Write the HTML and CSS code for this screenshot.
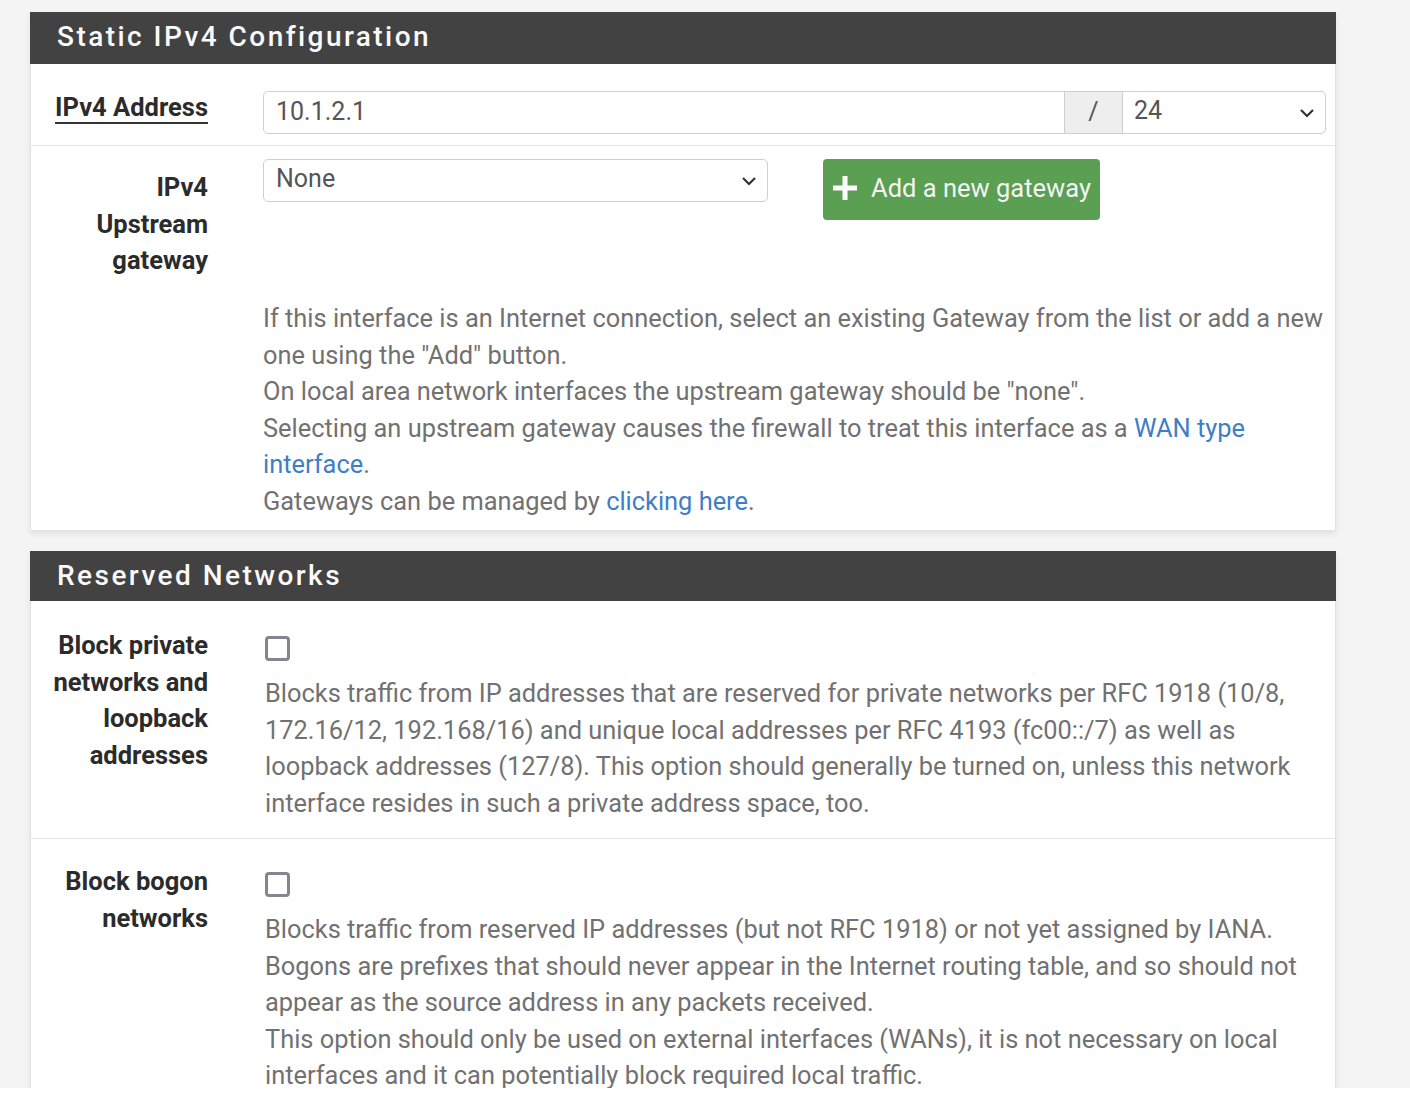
FILE: index.html
```html
<!DOCTYPE html>
<html>
<head>
<meta charset="utf-8">
<link rel="stylesheet" href="styles.css">
</head>
<body>
<div class="page">
  <div class="panel p1">
    <div class="panel-head">Static IPv4 Configuration</div>
    <div class="row r-addr">
      <div class="label"><span class="ul">IPv4 Address</span></div>
      <div class="field">
        <div class="igroup">
          <div class="itext">10.1.2.1</div>
          <div class="addon">/</div>
          <div class="isel"><span>24</span><svg class="chev" width="16" height="10" viewBox="0 0 16 10"><path d="M2 2 L8 8 L14 2" fill="none" stroke="#333" stroke-width="2.2"/></svg></div>
        </div>
      </div>
    </div>
    <div class="row r-gw">
      <div class="label">IPv4<br>Upstream<br>gateway</div>
      <div class="field">
        <div class="gwline">
          <div class="sel"><span>None</span><svg class="chev" width="16" height="10" viewBox="0 0 16 10"><path d="M2 2 L8 8 L14 2" fill="none" stroke="#333" stroke-width="2.2"/></svg></div>
          <div class="btn"><svg width="30" height="30" viewBox="0 0 30 30"><path d="M15 3 V27 M3 15 H27" stroke="#fff" stroke-width="5"/></svg><span>Add a new gateway</span></div>
        </div>
        <div class="help help-gw">If this interface is an Internet connection, select an existing Gateway from the list or add a new one using the "Add" button.<br>On local area network interfaces the upstream gateway should be "none".<br>Selecting an upstream gateway causes the firewall to treat this interface as a <a class="lnk">WAN type interface</a>.<br>Gateways can be managed by <a class="lnk">clicking here</a>.</div>
      </div>
    </div>
  </div>

  <div class="panel p2">
    <div class="panel-head">Reserved Networks</div>
    <div class="row r-cb r-priv">
      <div class="label">Block private networks and loopback addresses</div>
      <div class="field field-cb">
        <div class="cb"></div>
        <div class="help">Blocks traffic from IP addresses that are reserved for private networks per RFC 1918 (10/8, 172.16/12, 192.168/16) and unique local addresses per RFC 4193 (fc00::/7) as well as loopback addresses (127/8). This option should generally be turned on, unless this network interface resides in such a private address space, too.</div>
      </div>
    </div>
    <div class="row r-cb r-bogon">
      <div class="label">Block bogon<br>networks</div>
      <div class="field field-cb">
        <div class="cb"></div>
        <div class="help">Blocks traffic from reserved IP addresses (but not RFC 1918) or not yet assigned by IANA.<br>Bogons are prefixes that should never appear in the Internet routing table, and so should not appear as the source address in any packets received.<br>This option should only be used on external interfaces (WANs), it is not necessary on local interfaces and it can potentially block required local traffic.</div>
      </div>
    </div>
  </div>
</div>
</body>
</html>
```

FILE: styles.css
```css
html, body {
  margin: 0;
  padding: 0;
  background: #ffffff;
}
body {
  font-family: Roboto, "Liberation Sans", sans-serif;
  color: #333;
}
.page {
  height: 1088px;
  overflow: hidden;
  background: #f4f4f4;
  padding: 12px 0 0 30px;
  box-sizing: border-box;
}
.panel {
  width: 1306px;
  background: #fff;
  border: 1px solid #e2e2e2;
  border-top: none;
  box-sizing: border-box;
  box-shadow: 0 3px 6px rgba(0,0,0,0.08);
}
.p2 {
  margin-top: 20px;
}
.panel-head {
  background: #424242;
  color: #fafafa;
  font-size: 28px;
  font-weight: 500;
  letter-spacing: 2.45px;
  height: 52px;
  line-height: 50px;
  padding-left: 27px;
  margin: 0 -1px;
}
.p2 .panel-head {
  height: 50px;
  line-height: 49px;
}
.row {
  display: grid;
  grid-template-columns: 177px 1063px;
  column-gap: 55px;
  border-top: 1px solid #e4e4e4;
}
.panel-head + .row {
  border-top: none;
}
.label {
  text-align: right;
  font-size: 25.5px;
  font-weight: 700;
  line-height: 36.5px;
  color: #2b2b2b;
}
.ul {
  border-bottom: 2px solid #333;
}
.r-addr {
  height: 81px;
  padding-top: 27px;
  box-sizing: border-box;
}
.r-addr .label {
  margin-top: -2px;
}
.igroup {
  display: flex;
  height: 43px;
  border: 1px solid #cfcfcf;
  border-radius: 5px;
  box-sizing: border-box;
  font-size: 25px;
  color: #555;
}
.itext {
  width: 788px;
  padding-left: 12px;
  line-height: 40px;
}
.addon {
  width: 57px;
  background: #eeeeee;
  border-left: 1px solid #cfcfcf;
  border-right: 1px solid #cfcfcf;
  text-align: center;
  line-height: 40px;
  color: #555;
}
.isel, .sel {
  flex: 1;
  display: flex;
  align-items: center;
  justify-content: space-between;
  padding: 0 10px 0 11px;
}
.isel span {
  line-height: 36px;
  margin-top: -4px;
}
.r-gw {
  padding-top: 13px;
  padding-bottom: 11px;
}
.r-gw .label {
  padding-top: 10px;
}
.gwline {
  display: flex;
  align-items: flex-start;
  gap: 55px;
}
.sel {
  flex: none;
  width: 505px;
  height: 43px;
  box-sizing: border-box;
  border: 1px solid #cfcfcf;
  border-radius: 5px;
  font-size: 25px;
  color: #555;
  padding: 0 10px 0 12px;
}
.sel span {
  margin-top: -4px;
}
.btn {
  display: flex;
  align-items: center;
  gap: 11px;
  height: 61px;
  width: 277px;
  box-sizing: border-box;
  background: #5b9f52;
  border-radius: 4px;
  color: #f4f4f4;
  font-size: 25.5px;
  padding: 0 0 4px 7px;
}
.help {
  font-size: 25.4px;
  line-height: 36.5px;
  color: #717171;
  margin-right: -5px;
}
.help-gw {
  margin-top: 80px;
}
.lnk {
  color: #3f7ec4;
  text-decoration: none;
}
.r-cb {
  padding-top: 26px;
}
.r-priv {
  height: 237px;
  box-sizing: border-box;
}
.r-bogon {
  padding-top: 24px;
}
.field-cb {
  padding-left: 2px;
}
.cb {
  width: 25px;
  height: 25px;
  box-sizing: border-box;
  border: 3px solid #858590;
  border-radius: 4px;
  margin-top: 9px;
  margin-bottom: 14px;
}
```
